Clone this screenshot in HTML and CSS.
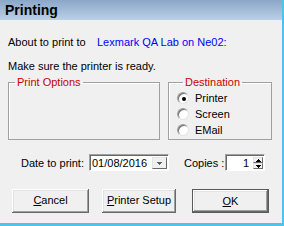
FILE: index.html
```html
<!DOCTYPE html>
<html>
<head>
<meta charset="utf-8">
<link rel="stylesheet" href="styles.css">
</head>
<body>
<div class="dialog">
  <div class="titlebar">Printing</div>
  <div class="content">
    <div class="line about"><span class="lbl">About to print to</span><span class="printer">Lexmark QA Lab on Ne02:</span></div>
    <div class="line ready">Make sure the printer is ready.</div>
    <div class="groups">
      <fieldset class="group opts"><legend>Print Options</legend></fieldset>
      <fieldset class="group dest"><legend>Destination</legend>
        <div class="radio"><span class="rb checked"></span>Printer</div>
        <div class="radio"><span class="rb"></span>Screen</div>
        <div class="radio"><span class="rb"></span>EMail</div>
      </fieldset>
    </div>
    <div class="fields">
      <span class="datelbl">Date to print:</span>
      <div class="combo"><span class="val">01/08/2016</span><span class="drop"><svg width="5" height="3" viewBox="0 0 5 3"><rect x="0" y="0" width="5" height="1" fill="#606060"/><rect x="1" y="1" width="3" height="1" fill="#606060"/><rect x="2" y="2" width="1" height="1" fill="#606060"/></svg></span></div>
      <span class="copieslbl">Copies :</span>
      <div class="spin"><span class="val">1</span><span class="spinbtns"><span class="sb"><svg width="5" height="3" viewBox="0 0 5 3"><rect x="2" y="0" width="1" height="1" fill="#000"/><rect x="1" y="1" width="3" height="1" fill="#000"/><rect x="0" y="2" width="5" height="1" fill="#000"/></svg></span><span class="sb"><svg width="5" height="3" viewBox="0 0 5 3"><rect x="0" y="0" width="5" height="1" fill="#000"/><rect x="1" y="1" width="3" height="1" fill="#000"/><rect x="2" y="2" width="1" height="1" fill="#000"/></svg></span></span></div>
    </div>
    <div class="buttons">
      <div class="btn cancel"><u>C</u>ancel</div>
      <div class="btn setup"><u>P</u>rinter Setup</div>
      <div class="btn ok def"><u>O</u>K</div>
    </div>
  </div>
</div>
</body>
</html>
```
FILE: styles.css
```css
html, body {
  margin: 0;
  padding: 0;
  background: #f0f0f0;
}
body {
  font-family: "Liberation Sans", Arial, sans-serif;
  font-size: 11px;
  color: #000;
}
.dialog {
  width: 284px;
  height: 226px;
  box-sizing: border-box;
  background: #f0f0f0;
  border-right: 2px solid #4fc4ea;
  border-bottom: 3px solid #4fc4ea;
  display: flex;
  flex-direction: column;
}
.titlebar {
  height: 20px;
  line-height: 20px;
  padding-left: 5px;
  font-size: 14px;
  font-weight: bold;
  background: linear-gradient(#8ba6c8, #bbd0e7);
}
.content {
  padding: 0 8px;
  display: flex;
  flex-direction: column;
}
.line {
  line-height: 13px;
  height: 13px;
  white-space: nowrap;
}
.about {
  margin-top: 16px;
  display: flex;
}
.lbl {
  width: 89px;
}
.printer {
  color: #0000ff;
}
.ready {
  margin-top: 11px;
}
.groups {
  margin-top: 3px;
  display: flex;
  gap: 8px;
}
.group {
  margin: 0;
  padding: 0;
  box-sizing: border-box;
  height: 64px;
  border: 1px solid #a0a0a0;
  box-shadow: inset 1px 1px 0 #fff;
}
.group legend {
  color: #c80000;
  line-height: 13px;
  margin-left: 6px;
  padding: 0 2px;
}
.opts {
  width: 152px;
}
.dest {
  width: 104px;
  padding-left: 8px;
  padding-top: 1px;
}
.radio {
  height: 16px;
  line-height: 16px;
  display: flex;
  align-items: center;
}
.rb {
  width: 12px;
  height: 12px;
  box-sizing: border-box;
  border-radius: 50%;
  background: #fff;
  border: 1px solid;
  border-color: #a0a0a0 #e3e3e3 #e3e3e3 #a0a0a0;
  box-shadow: inset 1px 1px 0 #696969;
  margin-right: 6px;
  display: flex;
  align-items: center;
  justify-content: center;
}
.rb.checked::after {
  content: "";
  width: 4px;
  height: 4px;
  border-radius: 50%;
  background: #000;
  margin: 1px 0 0 1px;
}
.fields {
  margin-top: 14px;
  height: 17px;
  display: flex;
  align-items: center;
  padding-left: 13px;
}
.datelbl {
  width: 68px;
}
.combo, .spin {
  height: 17px;
  box-sizing: border-box;
  background: #fff;
  border: 1px solid;
  border-color: #a0a0a0 #fff #fff #a0a0a0;
  box-shadow: inset 1px 1px 0 #696969;
  display: flex;
  align-items: stretch;
}
.combo {
  width: 80px;
  padding: 2px 1px 1px 2px;
}
.combo .val {
  flex: 1;
  line-height: 13px;
}
.drop {
  width: 15px;
  box-sizing: border-box;
  background: #f0f0f0;
  border: 1px solid;
  border-color: #e3e3e3 #696969 #696969 #e3e3e3;
  display: flex;
  align-items: center;
  justify-content: center;
}
.copieslbl {
  margin-left: 15px;
  width: 41px;
}
.spin {
  width: 40px;
  padding: 2px 1px 1px 2px;
}
.spin .val {
  flex: 1;
  text-align: right;
  line-height: 13px;
  padding-right: 4px;
}
.spinbtns {
  width: 10px;
  display: flex;
  flex-direction: column;
}
.sb {
  flex: 1;
  box-sizing: border-box;
  background: #f0f0f0;
  border: 1px solid;
  border-color: #e3e3e3 #696969 #696969 #e3e3e3;
  display: flex;
  align-items: center;
  justify-content: center;
}
.buttons {
  margin-top: 18px;
  display: flex;
  padding-left: 4px;
}
.btn {
  height: 24px;
  box-sizing: border-box;
  line-height: 23px;
  text-align: center;
  background: #f0f0f0;
  box-shadow: inset -1px -1px 0 #696969, inset 1px 1px 0 #fff, inset -2px -2px 0 #a0a0a0, inset 2px 2px 0 #e3e3e3;
}
.cancel {
  width: 77px;
}
.setup {
  width: 74px;
  margin-left: 13px;
}
.ok {
  width: 77px;
  margin-left: 16px;
}
.btn.def {
  border: 1px solid #5a5a5a;
}
```
